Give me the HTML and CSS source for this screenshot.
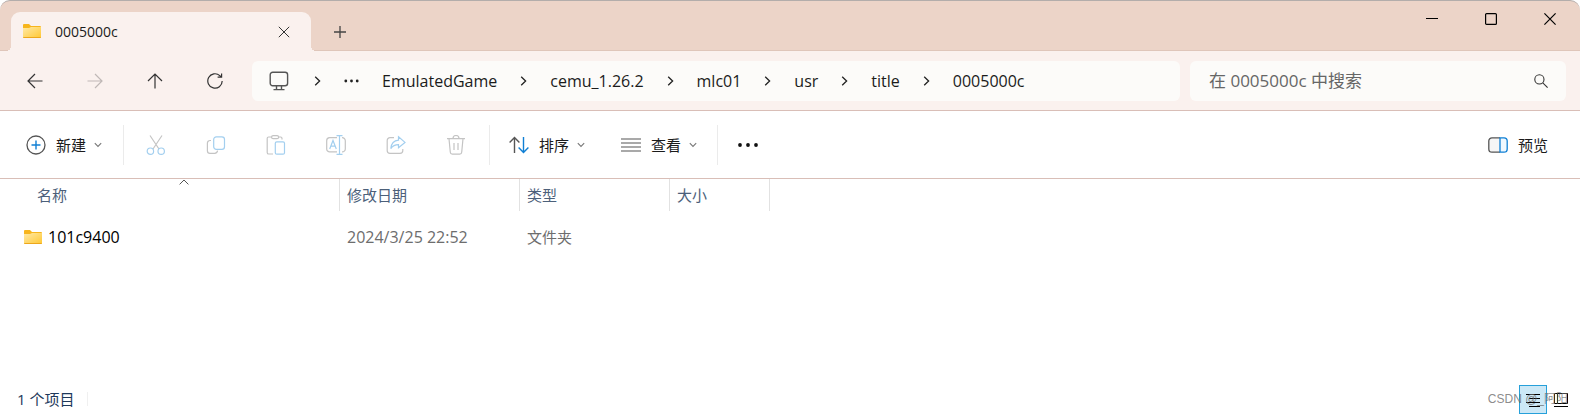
FILE: index.html
```
<!DOCTYPE html>
<html lang="zh-CN">
<head>
  <meta charset="UTF-8">
  <title>0005000c</title>
  <link rel="stylesheet" href="styles.css">
</head>
<body>

  <svg class="defs" aria-hidden="true">
    <linearGradient id="folderFill" x1="0" y1="0" x2="1" y2="1">
      <stop offset="0" stop-color="#ffe9a6"/>
      <stop offset="1" stop-color="#ffc833"/>
    </linearGradient>
    <symbol id="folder" viewBox="0 0 18 15">
      <path d="M0 1a1 1 0 0 1 1-1h5l2 2h9a1 1 0 0 1 1 1v4H0z" fill="#f7b51c"/>
      <path d="M0 4h6l2-1h10v10a1 1 0 0 1-1 1H1a1 1 0 0 1-1-1z" fill="url(#folderFill)"/>
      <path d="M0 13h18v0a1 1 0 0 1-1 1H1a1 1 0 0 1-1-1z" fill="#eda71b"/>
    </symbol>
    <symbol id="chevron" viewBox="0 0 7 10">
      <path d="M1.2.8 5.6 5 1.2 9.2" fill="none" stroke="#222" stroke-width="1.3"/>
    </symbol>
    <symbol id="down" viewBox="0 0 8 6">
      <path d="M.8 1.2 4 4.4 7.2 1.2" fill="none" stroke="#777" stroke-width="1.1"/>
    </symbol>
  </svg>

  <header class="titlebar">
    <div class="tab">
      <svg width="18" height="15"><use href="#folder"/></svg>
      <span class="tab-title">0005000c</span>
      <button type="button" aria-label="关闭标签页">
        <svg width="12" height="12" viewBox="0 0 12 12"><path d="M.8.8l10.4 10.4M11.2.8.8 11.2" stroke="#333"/></svg>
      </button>
    </div>
    <button type="button" class="new-tab" aria-label="新标签页">
      <svg width="12" height="12" viewBox="0 0 12 12"><path d="M6 0v12M0 6h12" stroke="#444" stroke-width="1.3"/></svg>
    </button>
    <div class="controls">
      <button type="button" aria-label="最小化">
        <svg width="12" height="12" viewBox="0 0 12 12"><path d="M0 5.5h12" stroke="#000"/></svg>
      </button>
      <button type="button" aria-label="最大化">
        <svg width="12" height="12" viewBox="0 0 12 12"><rect x=".6" y=".6" width="10.8" height="10.8" rx="1" fill="none" stroke="#000" stroke-width="1.2"/></svg>
      </button>
      <button type="button" aria-label="关闭">
        <svg width="12" height="12" viewBox="0 0 12 12"><path d="M.4.4l11.2 11.2M11.6.4.4 11.6" stroke="#000" stroke-width="1.2"/></svg>
      </button>
    </div>
  </header>

  <nav class="navbar">
    <button type="button" class="nav-btn" aria-label="后退">
      <svg width="16" height="16" viewBox="0 0 16 16"><path d="M15.5 8H1M8 1 1 8l7 7"/></svg>
    </button>
    <button type="button" class="nav-btn" aria-label="前进" disabled>
      <svg width="16" height="16" viewBox="0 0 16 16"><path d="M.5 8H15M8 1l7 7-7 7"/></svg>
    </button>
    <button type="button" class="nav-btn" aria-label="上移">
      <svg width="16" height="16" viewBox="0 0 16 16"><path d="M8 15.5V1M1 8l7-7 7 7"/></svg>
    </button>
    <button type="button" class="nav-btn" aria-label="刷新">
      <svg width="16" height="16" viewBox="0 0 16 16"><path d="M15.2 8A7.2 7.2 0 1 1 12.8 2.6L14.4 4M14.6.5V4.2H10.6"/></svg>
    </button>

    <div class="address">
      <button type="button" class="pc" aria-label="此电脑">
        <svg width="20" height="20" viewBox="0 0 20 20" fill="none" stroke="#555" stroke-width="1.4"><rect x="1.2" y="1.2" width="17.4" height="13.6" rx="2.5"/><path d="M7.5 15v3M12.5 15v3M4.5 18.6h11"/></svg>
      </button>
      <svg class="sep" width="7" height="10"><use href="#chevron"/></svg>
      <button type="button" class="more" aria-label="更多">
        <svg width="15" height="4" viewBox="0 0 15 4" fill="#222"><circle cx="1.8" cy="2" r="1.4"/><circle cx="7.5" cy="2" r="1.4"/><circle cx="13.2" cy="2" r="1.4"/></svg>
      </button>
      <a href="#">EmulatedGame</a>
      <svg class="sep" width="7" height="10"><use href="#chevron"/></svg>
      <a href="#">cemu_1.26.2</a>
      <svg class="sep" width="7" height="10"><use href="#chevron"/></svg>
      <a href="#">mlc01</a>
      <svg class="sep" width="7" height="10"><use href="#chevron"/></svg>
      <a href="#">usr</a>
      <svg class="sep" width="7" height="10"><use href="#chevron"/></svg>
      <a href="#">title</a>
      <svg class="sep" width="7" height="10"><use href="#chevron"/></svg>
      <a href="#">0005000c</a>
    </div>

    <form class="search">
      <input type="text" aria-label="搜索" placeholder="在 0005000c 中搜索">
      <button type="submit" aria-label="搜索">
        <svg width="14" height="14" viewBox="0 0 14 14" fill="none" stroke="#333" stroke-width="1.1"><circle cx="5.4" cy="5.4" r="4.6"/><path d="m8.8 8.8 4.8 4.8"/></svg>
      </button>
    </form>
  </nav>

  <div class="toolbar">
    <button type="button" class="cmd cmd-new">
      <svg width="20" height="20" viewBox="0 0 20 20" fill="none"><circle cx="10" cy="10" r="9" stroke="#555" stroke-width="1.3"/><path d="M10 5.5v9M5.5 10h9" stroke="#0f7fd4" stroke-width="1.4"/></svg>
      新建
      <svg width="8" height="6"><use href="#down"/></svg>
    </button>
    <span class="divider"></span>
    <div class="file-actions">
      <button type="button" class="icon-btn" aria-label="剪切" disabled>
        <svg width="20" height="20" viewBox="0 0 20 20"><path class="g" d="M4 .5 13 14M16 .5 7 14"/><circle class="b" cx="4.4" cy="16.2" r="3.2"/><circle class="b" cx="15.2" cy="16.2" r="3.2"/></svg>
      </button>
      <button type="button" class="icon-btn" aria-label="复制" disabled>
        <svg width="20" height="20" viewBox="0 0 20 20"><path class="g" d="M5 5.5H4a2.6 2.6 0 0 0-2.6 2.6v7.6A2.6 2.6 0 0 0 4 18.3h4.6a3 3 0 0 0 3-2.6"/><rect class="b" x="7.7" y="1.8" width="10.8" height="12.6" rx="2.6"/></svg>
      </button>
      <button type="button" class="icon-btn" aria-label="粘贴" disabled>
        <svg width="20" height="20" viewBox="0 0 20 20"><path class="g" d="M6 2H2.6A1.4 1.4 0 0 0 1.2 3.4v14A1.6 1.6 0 0 0 2.8 19H7M12 2h2.6A1.4 1.4 0 0 1 16 3.4V4.5"/><rect class="g" x="5.6" y=".7" width="7" height="3" rx="1.5"/><rect class="b" x="9.3" y="6.8" width="9.2" height="12.4" rx="1.5"/></svg>
      </button>
      <button type="button" class="icon-btn" aria-label="重命名" disabled>
        <svg width="20" height="20" viewBox="0 0 20 20"><path class="g" d="M11 2.7H3.6a3 3 0 0 0-2.9 3v8.2a3 3 0 0 0 3 3H11M16 2.7a3 3 0 0 1 3.3 3v8.2a3 3 0 0 1-3.3 3"/><path class="b" d="M3.7 14 7 5.5l3.3 8.5M4.9 11.2h4.3M13.5 1v18M10.5.7h6M10.5 19.3h6"/></svg>
      </button>
      <button type="button" class="icon-btn" aria-label="共享" disabled>
        <svg width="20" height="20" viewBox="0 0 20 20"><path class="g" d="M8 2.7H4a2.8 2.8 0 0 0-2.8 2.8v10A2.8 2.8 0 0 0 4 18.3h10a2.8 2.8 0 0 0 2.8-2.8V14"/><path class="b" d="M12.5 1.8 19 7.4l-6.5 5.4V9.6C9 9.6 6.5 11 4.8 13.6 5.3 8.6 8.5 5.5 12.5 5.2z"/></svg>
      </button>
      <button type="button" class="icon-btn" aria-label="删除" disabled>
        <svg width="20" height="20" viewBox="0 0 20 20"><path class="g" d="M1 3.7h18M7 3.5a3 3 0 0 1 6 0M3 3.7l1.3 13.5a2 2 0 0 0 2 1.9h7.4a2 2 0 0 0 2-1.9L17 3.7M8 8v7M12 8v7"/></svg>
      </button>
    </div>
    <span class="divider"></span>
    <button type="button" class="cmd">
      <svg width="20" height="18" viewBox="0 0 20 18" fill="none" stroke-width="1.4"><path d="M5.5 17V1.5M.6 6.5l4.9-5 4.9 5" stroke="#555"/><path d="M14.5 1v15.500M9.6 11.5l4.900 5 4.900-5" stroke="#0f7fd4"/></svg>
      排序
      <svg width="8" height="6"><use href="#down"/></svg>
    </button>
    <button type="button" class="cmd cmd-view">
      <svg width="20" height="14" viewBox="0 0 20 14"><path d="M0 1h20M0 5h20M0 9h20M0 13h20" stroke="#555" stroke-width="1.2"/></svg>
      查看
      <svg width="8" height="6"><use href="#down"/></svg>
    </button>
    <span class="divider"></span>
    <button type="button" class="icon-btn" aria-label="查看更多">
      <svg width="20" height="4" viewBox="0 0 20 4" fill="#111"><circle cx="2" cy="2" r="1.9"/><circle cx="10" cy="2" r="1.9"/><circle cx="18" cy="2" r="1.9"/></svg>
    </button>
    <button type="button" class="cmd cmd-preview">
      <svg width="20" height="16" viewBox="0 0 20 16" fill="#f6f6f6" stroke-width="1.3"><path d="M12 .8H4A3.2 3.2 0 0 0 .8 4v8A3.2 3.2 0 0 0 4 15.2h8" stroke="#555"/><path d="M12 .8h4A3.2 3.2 0 0 1 19.2 4v8a3.2 3.2 0 0 1-3.2 3.2h-4z" stroke="#0f7fd4" fill="#eef8ff"/></svg>
      预览
    </button>
  </div>

  <main>
    <table>
      <colgroup>
        <col class="col-name"><col class="col-date"><col class="col-type"><col class="col-size"><col>
      </colgroup>
      <thead>
        <tr>
          <th>名称
            <svg class="sort" width="10" height="6" viewBox="0 0 10 6"><path d="M.6 5.4 5 1l4.4 4.4" fill="none" stroke="#555"/></svg>
          </th>
          <th>修改日期</th>
          <th>类型</th>
          <th>大小</th>
          <td></td>
        </tr>
      </thead>
      <tbody>
        <tr>
          <td class="name"><a href="#"><svg width="18" height="15"><use href="#folder"/></svg>101c9400</a></td>
          <td class="date">2024/3/25 22:52</td>
          <td>文件夹</td>
          <td></td>
          <td></td>
        </tr>
      </tbody>
    </table>
  </main>

  <footer>
    <span class="count">1 个项目</span>
    <div class="views">
      <button type="button" class="active" aria-label="详细信息">
        <svg width="14" height="14" viewBox="0 0 14 14"><path d="M0 1.5h14M3 5.5h11M0 9.5h14M3 13.5h11" stroke="#000"/></svg>
      </button>
      <button type="button" aria-label="大图标">
        <svg width="14" height="14" viewBox="0 0 14 14"><path d="M.5.5h13v10H.5zM3.5.5v10M0 13.5h14" fill="none" stroke="#000"/></svg>
      </button>
    </div>
    <span class="watermark">CSDN @_阿阳</span>
  </footer>

</body>
</html>
```
FILE: styles.css
```
:root {
  --title-bg: #ecd4c8;
  --nav-bg: #faf1ee;
  --field-bg: #fcfbf9;
  --line: #d9beb7;
  --header-text: #4c607a;
  --font: "Open Sans", "Noto Sans", "Noto Sans CJK SC", sans-serif;
}
*, *::before, *::after {
  box-sizing: border-box;
  margin: 0;
  padding: 0;
}
body {
  display: flex;
  flex-direction: column;
  min-height: 100vh;
  font-family: var(--font);
  font-size: 15px;
  line-height: 20px;
  color: #1b1b1b;
  background: #fff;
}
svg {
  display: block;
  flex: none;
}
.defs {
  position: absolute;
  width: 0;
  height: 0;
}
button {
  display: flex;
  align-items: center;
  justify-content: center;
  border: none;
  background: none;
  font: inherit;
  color: inherit;
}
a {
  color: inherit;
  text-decoration: none;
}

/* title bar */
.titlebar {
  display: flex;
  align-items: flex-end;
  height: 51px;
  padding: 0 1px 0 11px;
  background: var(--title-bg);
  border-top: 1px solid #b3adab;
  border-radius: 10px 10px 0 0;
  box-shadow: inset 0 -1px #dfc6ba;
}
.tab {
  position: relative;
  display: flex;
  align-items: center;
  width: 300px;
  height: 39px;
  padding: 0 21px 0 12px;
  background: var(--nav-bg);
  border-radius: 9px 9px 0 0;
}
.tab::before,
.tab::after {
  content: "";
  position: absolute;
  bottom: 0;
  width: 5px;
  height: 5px;
}
.tab::before {
  right: 100%;
  background: radial-gradient(circle at 0 0, transparent 5px, var(--nav-bg) 5px);
}
.tab::after {
  left: 100%;
  background: radial-gradient(circle at 100% 0, transparent 5px, var(--nav-bg) 5px);
}
.tab-title {
  flex: 1;
  margin-left: 14px;
  font-size: 14px;
  font-weight: 500;
}
.new-tab {
  width: 58px;
  height: 38px;
}
.controls {
  display: flex;
  align-self: flex-start;
  margin-left: auto;
}
.controls button {
  width: 59px;
  height: 36px;
}

/* navigation */
.navbar {
  display: flex;
  align-items: center;
  height: 60px;
  padding: 0 14px 0 5px;
  background: var(--nav-bg);
  border-bottom: 1px solid var(--line);
}
.nav-btn {
  width: 60px;
  height: 40px;
}
.nav-btn svg {
  fill: none;
  stroke: #333;
  stroke-width: 1.2;
}
.nav-btn:disabled svg {
  stroke: #bfb8b6;
}
.address {
  display: flex;
  flex: 1;
  align-items: center;
  height: 40px;
  margin: 0 10px 0 7px;
  padding: 0 17px;
  background: var(--field-bg);
  border-radius: 6px;
  font-size: 16px;
}
.sep {
  margin: 0 23px;
}
.pc {
  margin-right: 2px;
}
.more {
  margin-right: 23px;
}
.search {
  display: flex;
  align-items: center;
  width: 376px;
  height: 40px;
  padding: 0 18px 0 19px;
  background: var(--field-bg);
  border-radius: 6px;
}
.search input {
  flex: 1;
  min-width: 0;
  border: none;
  outline: none;
  background: none;
  font-family: var(--font);
  font-size: 17px;
}
.search input::placeholder {
  color: #666;
}

/* command bar */
.toolbar {
  display: flex;
  align-items: center;
  height: 68px;
  padding: 0 32px 0 26px;
  border-bottom: 1px solid var(--line);
}
.cmd {
  gap: 10px;
  height: 40px;
}
.cmd svg + svg {
  margin-left: -2px;
}
.cmd-new {
  margin-right: 21px;
}
.divider {
  width: 1px;
  height: 40px;
  background: #ebebeb;
}
.file-actions {
  display: flex;
  padding: 0 3px 0 2px;
}
.icon-btn {
  width: 60px;
  height: 40px;
}
.icon-btn .g,
.icon-btn .b {
  fill: none;
  stroke: #c4c4c4;
  stroke-width: 1.2;
}
.icon-btn .b {
  stroke: #a3cfef;
}
.divider + .cmd {
  margin-left: 19px;
}
.cmd-view {
  margin: 0 20px 0 36px;
}
.cmd-preview {
  margin-left: auto;
}

/* file list */
main {
  flex: 1;
}
table {
  width: 100%;
  table-layout: fixed;
  border-collapse: separate;
  border-spacing: 0;
}
.col-name {
  width: 340px;
}
.col-date {
  width: 180px;
}
.col-type {
  width: 150px;
}
.col-size {
  width: 100px;
}
th {
  position: relative;
  height: 32px;
  padding-left: 7px;
  border-right: 1px solid #e2e2e2;
  color: var(--header-text);
  font-weight: normal;
  text-align: left;
}
th:first-child {
  padding-left: 37px;
}
.sort {
  position: absolute;
  top: 0;
  left: 179px;
}
tbody td {
  height: 52px;
  padding-left: 7px;
  color: #6d6d6d;
}
tbody .name {
  padding-left: 24px;
  color: #000;
  font-size: 16px;
}
.name a {
  display: flex;
  align-items: center;
  gap: 6px;
}
tbody .date {
  font-size: 16px;
}

/* status bar */
footer {
  position: relative;
  display: flex;
  align-items: center;
  justify-content: space-between;
  height: 29px;
  padding: 0 6px 0 17px;
}
.count {
  margin-bottom: 2px;
  padding-right: 13px;
  border-right: 1px solid #f0f0f0;
  line-height: 14px;
  color: #1e395b;
}
.views {
  display: flex;
}
.views button {
  width: 27px;
  height: 29px;
}
.views .active {
  width: 28px;
  background: #cce8f6;
  border: 1px solid #26a0da;
}
.watermark {
  position: absolute;
  right: 12px;
  bottom: 5px;
  font-size: 12px;
  font-family: "Liberation Sans", "Noto Sans CJK SC", sans-serif;
  color: rgba(110, 110, 110, 0.8);
}
```
